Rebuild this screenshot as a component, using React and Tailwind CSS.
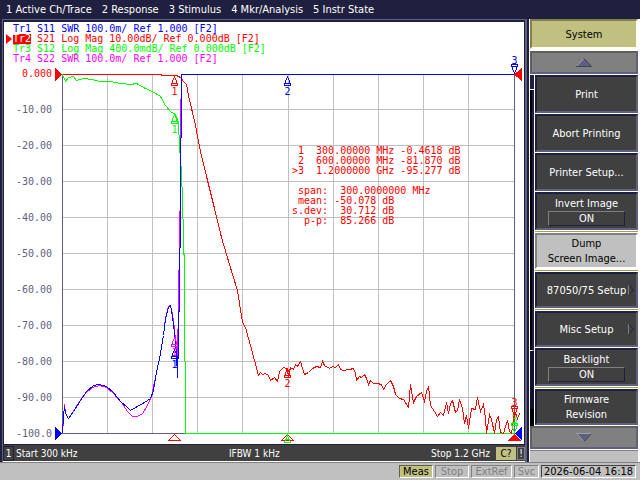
import React from 'react';
import clsx from 'clsx';

const MENU = ['1 Active Ch/Trace', '2 Response', '3 Stimulus', '4 Mkr/Analysis', '5 Instr State'];

const TRACES = [
  { id: 'Tr1', text: 'S11 SWR 100.0m/ Ref 1.000 [F2]', color: 'text-[#0000ff]' },
  { id: 'Tr2', text: 'S21 Log Mag 10.00dB/ Ref 0.000dB [F2]', color: 'text-[#ff0000]', active: true },
  { id: 'Tr3', text: 'S12 Log Mag 400.0mdB/ Ref 0.000dB [F2]', color: 'text-[#00ff00]' },
  { id: 'Tr4', text: 'S22 SWR 100.0m/ Ref 1.000 [F2]', color: 'text-[#ff00ff]' },
];

const SCALE = ['0.000', '-10.00', '-20.00', '-30.00', '-40.00', '-50.00', '-60.00', '-70.00', '-80.00', '-90.00', '-100.0'];

const MARKERS = [
  ' 1  300.00000 MHz -0.4618 dB',
  ' 2  600.00000 MHz -81.870 dB',
  '>3  1.2000000 GHz -95.277 dB',
];

const STATS = [
  ' span:  300.0000000 MHz',
  ' mean: -50.078 dB',
  's.dev:  30.712 dB',
  '  p-p:  85.266 dB',
];

const SOFTKEYS = [
  { label: 'Print' },
  { label: 'Abort Printing' },
  { label: 'Printer Setup...' },
  { label: 'Invert Image', value: 'ON' },
  { label: 'Dump\nScreen Image...', split: true, pressed: true },
  { label: '87050/75 Setup', split: true, submenu: true },
  { label: 'Misc Setup', split: true, submenu: true },
  { label: 'Backlight', value: 'ON' },
  { label: 'Firmware\nRevision', split: true },
];

// Grid line positions inside the chart
const COLS = [107, 152, 197, 242, 288, 333, 378, 423, 468];
const ROWS = [109, 145, 181, 217, 253, 289, 325, 361, 397];

const S21 =
  '62,74 160,74 162,75 176,75 180,77 183,81 186,84 188,95 192,112 195,124 197,136 200,151 207,180 214,208 221,237 229,264 237,290 242,322 245,327 250,345 254,360 258,375 260,372 262,374 265,373 268,375 270,380 274,377 277,381 279,371 283,367 286,368 288,375 290,367 293,369 295,364 297,366 300,361 302,368 304,374 308,372 312,368 316,366 320,367 322,361 324,365 329,368 332,366 335,367 338,364 340,369 343,370 349,369 353,368 355,373 356,380 359,376 361,377 364,374 366,378 368,384 370,380 373,383 377,383 381,384 383,389 386,384 390,380 393,386 395,394 399,398 403,399 408,407 410,384 413,402 416,396 421,392 424,401 426,391 428,386 430,405 434,411 437,416 440,412 443,415 446,402 448,413 450,403 452,400 455,412 457,410 459,399 462,408 464,423 466,415 468,428 471,408 475,409 477,397 480,411 483,404 485,418 486,433 489,414 491,419 494,433 496,419 498,416 500,432 503,433 505,426 507,420 509,431 511,433 514,410 517,418 519,413';

const S12 =
  '62,74 65,81 68,77 73,76 76,80 83,78 92,79 99,81 110,81 120,83 130,84 136,83 145,88 152,91 160,96 165,105 170,111 175,114 178,122 179,146 181,172 182,200 183,236 184,271 184,360 185,361 185,433 514,433';

const S11 =
  '62,433 63,415 64,406 65,413 68,418 73,411 80,400 86,391 93,385 99,384 106,386 113,392 120,401 127,407 130,410 137,406 144,402 150,398 153,390 155,377 160,353 163,335 165,318 168,307 170,305 172,316 174,333 176,353 177,377 178,340 178,312 179,310 179,248 180,247 180,138 181,137 181,74 514,74';

const S22 =
  '62,433 64,404 65,413 68,418 74,409 81,398 86,392 92,387 99,385 106,387 113,393 121,402 127,411 132,416 137,416 142,413 147,405 151,396 155,377 160,353 163,335 165,317 168,306 170,305 172,314 174,328 176,352 177,370 177,332 178,325 178,292 179,248 179,222 180,200 180,125 181,74';

function Marker({ x, y, n, color, down }) {
  return (
    <g transform={`translate(${x} ${y})`}>
      <path
        d={down ? 'M0 0V-1L-2 -6V-8M0 -1L2 -6V-8M-3 -8V-10H3V-8Z' : 'M0 0V1L-2 6V8M0 1L2 6V8M-3 8V10H3V8Z'}
        fill="none"
        stroke={color}
      />
      <text x="0" y={down ? -11 : 19} fill={color} textAnchor="middle">{n}</text>
    </g>
  );
}

function Chart() {
  return (
    <svg
      viewBox="54 69 470 374"
      className="block h-auto min-w-0 flex-1 overflow-visible font-['DejaVu_Sans_Mono',monospace] text-[10px]"
      shapeRendering="crispEdges"
      role="img"
      aria-label="S-parameter traces"
    >
      {/* grid */}
      <g stroke="#c0c0c0">
        {COLS.map((x) => <line key={x} x1={x + 0.5} x2={x + 0.5} y1="74" y2="433" />)}
        {ROWS.map((y) => <line key={y} x1="62" x2="514" y1={y + 0.5} y2={y + 0.5} />)}
      </g>
      <path d="M62.5 74V433.5H514.5V74" fill="none" stroke="#5f5f80" />

      {/* traces */}
      <g fill="none" transform="translate(0.5 0.5)">
        <polyline points={S12} stroke="#00ff00" />
        <polyline points={S22} stroke="#ff00ff" />
        <polyline points={S21} stroke="#ff0000" />
        <polyline points={S11} stroke="#0000ff" />
      </g>

      {/* markers */}
      <Marker x={174.5} y={75.5} n="1" color="#ff0000" />
      <Marker x={174.5} y={113.5} n="1" color="#00ff00" />
      <Marker x={174.5} y={336.5} n="1" color="#ff00ff" />
      <Marker x={174.5} y={348.5} n="1" color="#0000ff" />
      <Marker x={287.5} y={75.5} n="2" color="#0000ff" />
      <Marker x={287.5} y={367.5} n="2" color="#ff0000" />
      <Marker x={514.5} y={74.5} n="3" color="#0000ff" down />
      <Marker x={514.5} y={433.5} n="3" color="#00ff00" down />
      <Marker x={514.5} y={416.5} n="3" color="#ff0000" down />

      {/* stimulus markers on the axis */}
      <path d="M174.5 434.5L168.5 440.5H180.5Z" fill="none" stroke="#ff0000" />
      <path d="M287.5 434.5L281.5 440.5H293.5Z" fill="none" stroke="#ff0000" />
      <path d="M287.5 435.5L284.5 442.5H290.5Z M285 439.5H290" fill="none" stroke="#00ff00" />

      {/* reference arrows */}
      <path d="M55 68V81L62 74.5Z M522 68V81L514 74.5Z M514 434L508 441H521Z" fill="#ff0000" />
      <path d="M55 427V440L62 433.5Z M522 427V440L515 433.5Z" fill="#0000ff" />
    </svg>
  );
}

function TraceList() {
  return (
    <ul className="pl-2">
      {TRACES.map((t) => (
        <li key={t.id} className={clsx('relative flex h-[10px] items-center gap-[6px] whitespace-pre', t.color)}>
          {t.active && (
            <svg viewBox="0 0 6 10" className="absolute -left-[7px] h-[10px] w-[6px]" fill="currentColor">
              <path d="M0 0V10L6 5Z" />
            </svg>
          )}
          <span className={clsx(t.active && 'bg-[#ff0000] text-white')}>{t.id}</span>
          <span>{t.text}</span>
        </li>
      ))}
    </ul>
  );
}

function Softkey({ label, value, split, pressed, submenu }) {
  return (
    <div className="flex h-[39px] flex-col">
      {split && <div className="h-[2px] border-b border-white bg-[#a0a050]" />}
      <button
        type="button"
        className={clsx(
          'relative flex min-h-0 flex-1 flex-col items-center justify-center border-2 leading-[15px] whitespace-pre-line',
          pressed
            ? 'border-t-[#808080] border-r-white border-b-white border-l-[#808080] bg-[#c0c0c0] text-black'
            : 'border-t-[#1f1f3f] border-r-[#5f5f80] border-b-[#5f5f80] border-l-[#1f1f3f] bg-[#404040] text-white'
        )}
      >
        <span>{label}</span>
        {value && (
          <span className="w-[77px] border border-t-[#808080] border-r-[#1f1f3f] border-b-[#1f1f3f] border-l-[#808080] leading-[13px]">
            {value}
          </span>
        )}
        {submenu && (
          <svg viewBox="0 0 6 10" className="absolute right-[2px] h-[10px] w-[6px]" fill="none">
            <path d="M0.5 0V10" stroke="#808080" />
            <path d="M1 0.5L5.5 5L1 9.5" stroke="#1f1f3f" />
          </svg>
        )}
      </button>
      <div className="h-px bg-white" />
    </div>
  );
}

function ScrollKey({ up }) {
  return (
    <button
      type="button"
      aria-label={up ? 'Scroll up' : 'Scroll down'}
      className="flex h-[23px] w-full items-center justify-center border-2 border-t-[#5f5f60] border-r-[#5f5f80] border-b-[#5f5f80] border-l-[#5f5f60] bg-[#808080]"
    >
      <svg viewBox="0 0 16 9" className="h-[9px] w-4">
        {up ? (
          <>
            <path d="M8 0L0 9H16Z" fill="#5f5f80" />
            <path d="M8 0.5L0.5 8.5" stroke="#a0a0a0" />
            <path d="M8 0.5L15.5 8.5H0" stroke="#404060" fill="none" />
          </>
        ) : (
          <>
            <path d="M0 0H16L8 9Z" fill="#5f5f80" />
            <path d="M8 8.5L0.5 0.5H16" stroke="#a0a0a0" fill="none" />
            <path d="M8 8.5L15.5 0.5" stroke="#404060" />
          </>
        )}
      </svg>
    </button>
  );
}

function SoftkeyMenu() {
  return (
    <aside className="flex w-[111px] shrink-0 flex-col border-l border-white bg-white pr-[2px]">
      <h2 className="flex h-[30px] items-center justify-center border-2 border-t-[#808050] border-r-[#fffff0] border-b-[#fffff0] border-l-[#808050] bg-[#c0c080] text-black">
        System
      </h2>
      <div className="pt-[2px] pb-px">
        <ScrollKey up />
      </div>
      <div className="flex">
        {/* page position gutter */}
        <div className="flex w-[5px] shrink-0 flex-col border-r border-white">
          <div className="h-[15px] border-b border-white bg-[#1f1f3f]" />
          <div className="h-[261px] border-r-2 border-b border-r-[#1f1f3f] border-b-white bg-black" />
          <div className="h-[58px] bg-[#10102f]" />
          <div className="flex-1 bg-black" />
        </div>
        <div className="min-w-0 flex-1">
          {SOFTKEYS.map((k) => <Softkey key={k.label} {...k} />)}
        </div>
      </div>
      <ScrollKey />
      <div className="mt-px min-h-[12px] flex-1 border-t border-[#808080] bg-[#c0c0c0]" />
    </aside>
  );
}

function StatusBox({ children, className, on, off }) {
  return (
    <span
      className={clsx(
        'flex h-[13px] items-center justify-center border',
        on && 'border-t-[#606040] border-r-white border-b-white border-l-[#606040] bg-[#c0c080] text-black',
        off && 'border-t-[#808080] border-r-white border-b-white border-l-[#808080] text-[#808080]',
        !on && !off && 'border-t-[#404040] border-r-white border-b-white border-l-[#404040] text-black',
        className
      )}
    >
      {children}
    </span>
  );
}

export default function App() {
  return (
    <div className="flex min-h-screen flex-col bg-[#c0c0c0] font-['DejaVu_Sans_Condensed','DejaVu_Sans',sans-serif] text-[11px] leading-[13px]">
      <nav className="flex h-[19px] items-center gap-[10px] bg-[#1f1f3f] px-[6px] text-white">
        {MENU.map((m) => <button key={m} type="button" className="whitespace-nowrap">{m}</button>)}
      </nav>

      <div className="flex flex-1">
        <main className="flex min-w-0 flex-1 flex-col border-r-2 border-l-2 border-[#1f1f3f] bg-[#5f5f80] pt-px pr-[2px] pl-px">
          <section className="flex-1 border-t-2 border-r border-l border-[#1f1f3f] bg-white font-['DejaVu_Sans_Mono',monospace] text-[10px] leading-[10px]">
            <div className="pt-[2px] pb-[5px] pl-px">
              <TraceList />
            </div>
            <div className="relative flex">
              <div className="flex w-[50px] shrink-0 flex-col justify-between pr-[2px] pb-1 text-right text-[#5f5f80]">
                {SCALE.map((s, i) => <span key={s} className={clsx(i === 0 && 'text-[#ff0000]')}>{s}</span>)}
              </div>
              <Chart />
              <div className="absolute top-[77px] left-[55%] pl-[2px] text-[#ff0000]">
                <pre className="font-[inherit]">{MARKERS.join('\n')}</pre>
                <pre className="mt-[10px] font-[inherit]">{STATS.join('\n')}</pre>
              </div>
            </div>
          </section>

          <footer className="flex h-[18px] items-center border-t border-b border-t-[#1f1f3f] border-b-white bg-[#404040] text-[10px] text-white">
            <span className="flex h-[15px] w-[11px] items-center justify-center border border-[#1f1f3f]">1</span>
            <div className="flex flex-1 justify-between pr-[6px] pl-[2px]">
              <span>Start 300 kHz</span>
              <span>IFBW 1 kHz</span>
              <span>Stop 1.2 GHz</span>
            </div>
            <span className="flex h-[13px] w-5 items-center justify-center bg-[#c0c080] text-black">C?</span>
            <span className="ml-px flex h-[13px] w-2 items-center justify-center border border-[#808080]">!</span>
          </footer>
        </main>

        <SoftkeyMenu />
      </div>

      <div className="flex h-[18px] items-center justify-end gap-[2px] border-t border-[#808080] bg-[#c0c0c0] pr-1">
        <StatusBox on className="w-[34px]">Meas</StatusBox>
        <StatusBox off className="w-[34px]">Stop</StatusBox>
        <StatusBox off className="w-[41px]">ExtRef</StatusBox>
        <StatusBox off className="w-[25px]">Svc</StatusBox>
        <StatusBox className="w-[95px]">2026-06-04 16:18</StatusBox>
      </div>
    </div>
  );
}
